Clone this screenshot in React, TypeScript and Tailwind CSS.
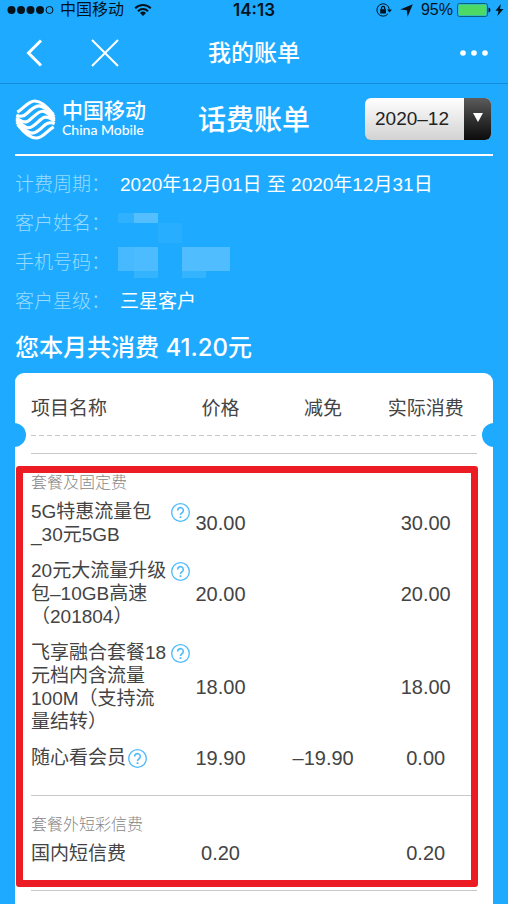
import type { ReactElement, ReactNode } from "react";

interface BillItem {
  name: string;
  price: string;
  discount?: string;
  actual: string;
  help?: boolean;
}

interface BillSection {
  title: string;
  items: BillItem[];
}

const COLUMNS = ["价格", "减免", "实际消费"];

const SECTIONS: BillSection[] = [
  {
    title: "套餐及固定费",
    items: [
      { name: "5G特惠流量包\n_30元5GB", price: "30.00", actual: "30.00", help: true },
      { name: "20元大流量升级\n包–10GB高速\n（201804）", price: "20.00", actual: "20.00", help: true },
      { name: "飞享融合套餐18\n元档内含流量\n100M（支持流\n量结转）", price: "18.00", actual: "18.00", help: true },
      { name: "随心看会员", price: "19.90", discount: "–19.90", actual: "0.00", help: true },
    ],
  },
  {
    title: "套餐外短彩信费",
    items: [{ name: "国内短信费", price: "0.20", actual: "0.20" }],
  },
];

export default function App(): ReactElement {
  return (
    <div className="flex min-h-screen flex-col bg-[#1eabff] font-['Liberation_Sans','Noto_Sans_CJK_SC',sans-serif] text-white">
      <StatusBar />
      <NavBar />
      <main className="flex flex-1 flex-col px-[15px]">
        <BrandRow />
        <dl className="pt-[9px] text-[19px] leading-[39px]">
          <InfoRow label="计费周期">2020年12月01日 至 2020年12月31日</InfoRow>
          <InfoRow label="客户姓名">
            <NameMosaic />
          </InfoRow>
          <InfoRow label="手机号码">
            <PhoneMosaic />
          </InfoRow>
          <InfoRow label="客户星级">三星客户</InfoRow>
        </dl>
        <p className="pt-[9px] pb-[7px] font-[Inter,'Noto_Sans_CJK_SC',sans-serif] text-[24px] leading-9 font-medium">
          您本月共消费 41.20元
        </p>
        <BillCard />
      </main>
    </div>
  );
}

function StatusBar(): ReactElement {
  return (
    <div className="grid h-5 grid-cols-[1fr_auto_1fr] items-center text-[16px] leading-5 text-[#04121c]">
      <div className="flex items-center pl-[7px]">
        <svg width="47" height="10" viewBox="0 0 47 10" aria-hidden="true">
          {[4.5, 14, 23.5, 33].map((cx) => (
            <circle key={cx} cx={cx} cy="5" r="4" fill="currentColor" />
          ))}
          <circle cx="42.5" cy="5" r="3.5" fill="none" stroke="currentColor" />
        </svg>
        <span className="ml-1.5">中国移动</span>
        <svg className="ml-2.5" width="18" height="14" viewBox="0 0 18 14" aria-hidden="true">
          <g fill="none" stroke="currentColor" strokeWidth="2">
            <path d="M1.2 5.2a11 11 0 0 1 15.6 0" />
            <path d="M4 8.2a7 7 0 0 1 10 0" />
          </g>
          <path d="M9 13 6 10a4.3 4.3 0 0 1 6 0Z" fill="currentColor" />
        </svg>
      </div>
      <span className="font-[Inter] text-[17px] font-semibold">14:13</span>
      <div className="flex items-center justify-end pr-1">
        <svg width="16" height="14" viewBox="0 0 16 14" aria-hidden="true">
          <path d="M12 10.8A6.2 6.2 0 1 1 13.3 6.5" fill="none" stroke="currentColor" />
          <path d="M11 6.5h5l-2.5 3Z" fill="currentColor" />
          <path d="M4.2 6.2h5.8v4.3H4.2z" fill="currentColor" />
          <path d="M5.5 6.5V5a1.6 1.6 0 0 1 3.2 0v1.5" fill="none" stroke="currentColor" strokeWidth="1.3" />
        </svg>
        <svg className="ml-2" width="13" height="13" viewBox="0 0 13 13" aria-hidden="true">
          <path d="M12.8.2 7.6 12.8 6.8 6.2.2 5.4Z" fill="currentColor" />
        </svg>
        <span className="ml-2">95%</span>
        <svg className="ml-1" width="34" height="14" viewBox="0 0 34 14" aria-hidden="true">
          <rect x=".5" y=".5" width="30" height="13" rx="2" fill="none" stroke="#0b5f80" />
          <rect x="1.5" y="1.5" width="28" height="11" rx="1" fill="#4cd964" />
          <path d="M31.5 4.5q2 .5 2 2.5t-2 2.5Z" fill="currentColor" />
        </svg>
        <svg className="ml-1" width="9" height="12" viewBox="0 0 9 12" aria-hidden="true">
          <path d="M5.8 0 .5 6.8h3L2.4 12 8.5 5H5Z" fill="currentColor" />
        </svg>
      </div>
    </div>
  );
}

function NavBar(): ReactElement {
  return (
    <header className="grid h-16 grid-cols-[1fr_auto_1fr] items-center border-b border-[#148cd8] pt-0.5">
      <div className="flex items-center gap-12 pl-[26px]">
        <button type="button" aria-label="返回">
          <svg width="17" height="28" viewBox="0 0 17 28" fill="none" stroke="currentColor" strokeWidth="3">
            <path d="M15 1.5 2.5 14 15 26.5" />
          </svg>
        </button>
        <button type="button" aria-label="关闭">
          <svg width="28" height="28" viewBox="0 0 28 28" fill="none" stroke="currentColor" strokeWidth="2">
            <path d="m1 1 26 26M27 1 1 27" />
          </svg>
        </button>
      </div>
      <h1 className="text-[23px] leading-8 font-medium">我的账单</h1>
      <button type="button" aria-label="更多" className="mr-5 justify-self-end">
        <svg width="28" height="6" viewBox="0 0 28 6" fill="currentColor">
          <circle cx="3" cy="3" r="2.8" />
          <circle cx="14" cy="3" r="2.8" />
          <circle cx="25" cy="3" r="2.8" />
        </svg>
      </button>
    </header>
  );
}

function BrandRow(): ReactElement {
  return (
    <div className="grid h-[72px] grid-cols-[1fr_auto_1fr] items-center border-b-2 border-white">
      <div className="flex items-center gap-1.5">
        <ChinaMobileLogo />
        <div>
          <div className="text-[21px] leading-[22px] font-medium">中国移动</div>
          <div className="font-[Lato] text-[14px] leading-4 font-medium">China Mobile</div>
        </div>
      </div>
      <h2 className="pt-1 text-[28px] leading-10 font-medium">话费账单</h2>
      <div className="relative mr-0.5 justify-self-end">
        <select
          aria-label="账单月份"
          className="h-[42px] w-[126px] appearance-none rounded-md bg-linear-to-b from-white to-[#d2d2d2] pl-2.5 text-[19px] text-[#222]"
        >
          <option>2020–12</option>
        </select>
        <span className="pointer-events-none absolute inset-y-0 right-0 flex w-[27px] justify-center rounded-r-md bg-linear-to-b from-[#5c5c5c] to-[#0c0c0c] pt-[15px]">
          <svg width="10" height="9" viewBox="0 0 10 9" aria-hidden="true">
            <path d="M0 0h10L5 9Z" fill="#fff" />
          </svg>
        </span>
      </div>
    </div>
  );
}

// 上半三条波纹,旋转 180° 得到下半三条
const LOGO_WAVES = [
  "M20 53C40 42 52 19 73 19C93 19 112 38 129 60",
  "M17 62C30 68 40 66 50 56C62 44 74 34 86 34C100 34 114 48 132 67",
  "M17 70C28 78 38 86 50 81C64 75 80 50 96 50C108 50 118 62 133 74",
];

function ChinaMobileLogo(): ReactElement {
  return (
    <svg width="41" height="41" viewBox="13 13 124 124" fill="none" stroke="currentColor" strokeWidth="9.5" aria-hidden="true">
      {LOGO_WAVES.map((d) => (
        <path key={d} d={d} />
      ))}
      <g transform="rotate(180 75 75)">
        {LOGO_WAVES.map((d) => (
          <path key={d} d={d} />
        ))}
      </g>
    </svg>
  );
}

function InfoRow({ label, children }: { label: string; children: ReactNode }): ReactElement {
  return (
    <div className="flex">
      <dt className="w-[105px] shrink-0 font-light text-[#98dbff]">{label}：</dt>
      <dd>{children}</dd>
    </div>
  );
}

// 隐私信息打码
function NameMosaic(): ReactElement {
  return (
    <svg className="-ml-0.5" width="112" height="39" viewBox="0 0 112 39" role="img" aria-label="已隐藏">
      <path d="M0 9h16v10H0z" fill="#2fb1ff" />
      <path d="M16 9h24v10H16z" fill="#54bfff" />
      <path d="M40 19h24v20H40z" fill="#28aeff" />
    </svg>
  );
}

function PhoneMosaic(): ReactElement {
  return (
    <svg className="-ml-0.5" width="112" height="39" viewBox="0 0 112 39" role="img" aria-label="已隐藏">
      <path d="M0 4h16v24H0z" fill="#46b9ff" />
      <path d="M16 4h24v24H16z" fill="#4cbbff" />
      <path d="M64 4h48v24H64z" fill="#50bdff" />
      <path d="M16 28h24v7H16zM64 28h24v7H64z" fill="#34b3ff" />
    </svg>
  );
}

function BillCard(): ReactElement {
  return (
    <section className="relative flex-1 rounded-t-[9px] bg-white px-4 pb-3 text-[#444]">
      <table className="w-full table-fixed text-[19px] leading-[23px]">
        <colgroup>
          <col className="w-[31%]" />
          <col className="w-[23%]" />
          <col className="w-[23%]" />
          <col className="w-[23%]" />
        </colgroup>
        <thead>
          <tr>
            <th scope="col" className="pt-6 pb-[15px] text-left font-normal">项目名称</th>
            {COLUMNS.map((c) => (
              <th key={c} scope="col" className="pt-6 pb-[15px] font-normal">{c}</th>
            ))}
          </tr>
          <tr>
            <td colSpan={4} className="pb-[17px]">
              <TicketTear />
            </td>
          </tr>
        </thead>
        {SECTIONS.map((s) => (
          <SectionRows key={s.title} section={s} />
        ))}
      </table>
      <div className="pointer-events-none absolute top-[93px] right-[15px] left-px h-[421px] rounded-[3px] border-7 border-[#ec1c24]" />
    </section>
  );
}

function TicketTear(): ReactElement {
  return (
    <div className="relative h-px bg-[repeating-linear-gradient(90deg,#c8c8c8_0_5px,transparent_5px_8px)]">
      <span className="absolute -top-3 -left-[29px] size-6 rounded-full bg-[#1eabff]" />
      <span className="absolute -top-3 -right-[29px] size-6 rounded-full bg-[#1eabff]" />
    </div>
  );
}

function SectionRows({ section }: { section: BillSection }): ReactElement {
  return (
    <tbody className="border-y border-[#c8c8c8]">
      <tr>
        <th scope="rowgroup" colSpan={4} className="pt-[18px] text-left text-[16px] leading-[22px] font-light text-[#888]">
          {section.title}
        </th>
      </tr>
      {section.items.map((it) => (
        <tr key={it.name}>
          <th scope="row" className="pt-1.5 pb-[7px] text-left font-normal">
            <div className="flex items-start">
              <span className={`shrink-0 whitespace-pre ${it.name.includes("\n") ? "w-full" : ""}`}>{it.name}</span>
              {it.help && <HelpButton />}
            </div>
          </th>
          <td className="text-center text-[20px]">{it.price}</td>
          <td className="text-center text-[20px]">{it.discount}</td>
          <td className="text-center text-[20px]">{it.actual}</td>
        </tr>
      ))}
      <tr>
        <td colSpan={4} className="h-[19px]" />
      </tr>
    </tbody>
  );
}

function HelpButton(): ReactElement {
  return (
    <button type="button" aria-label="说明" className="mt-[3px] ml-0.5 shrink-0 text-[#4dbbfa]">
      <svg width="19" height="19" viewBox="0 0 19 19" fill="none" stroke="currentColor" strokeWidth="1.3">
        <circle cx="9.5" cy="9.5" r="8.8" />
        <path d="M6.7 7.5a2.8 2.8 0 1 1 4.4 2.2c-1 .7-1.6 1.1-1.6 2.3" strokeWidth="1.6" />
        <path d="M9.5 13.2v1.8" strokeWidth="1.8" />
      </svg>
    </button>
  );
}
